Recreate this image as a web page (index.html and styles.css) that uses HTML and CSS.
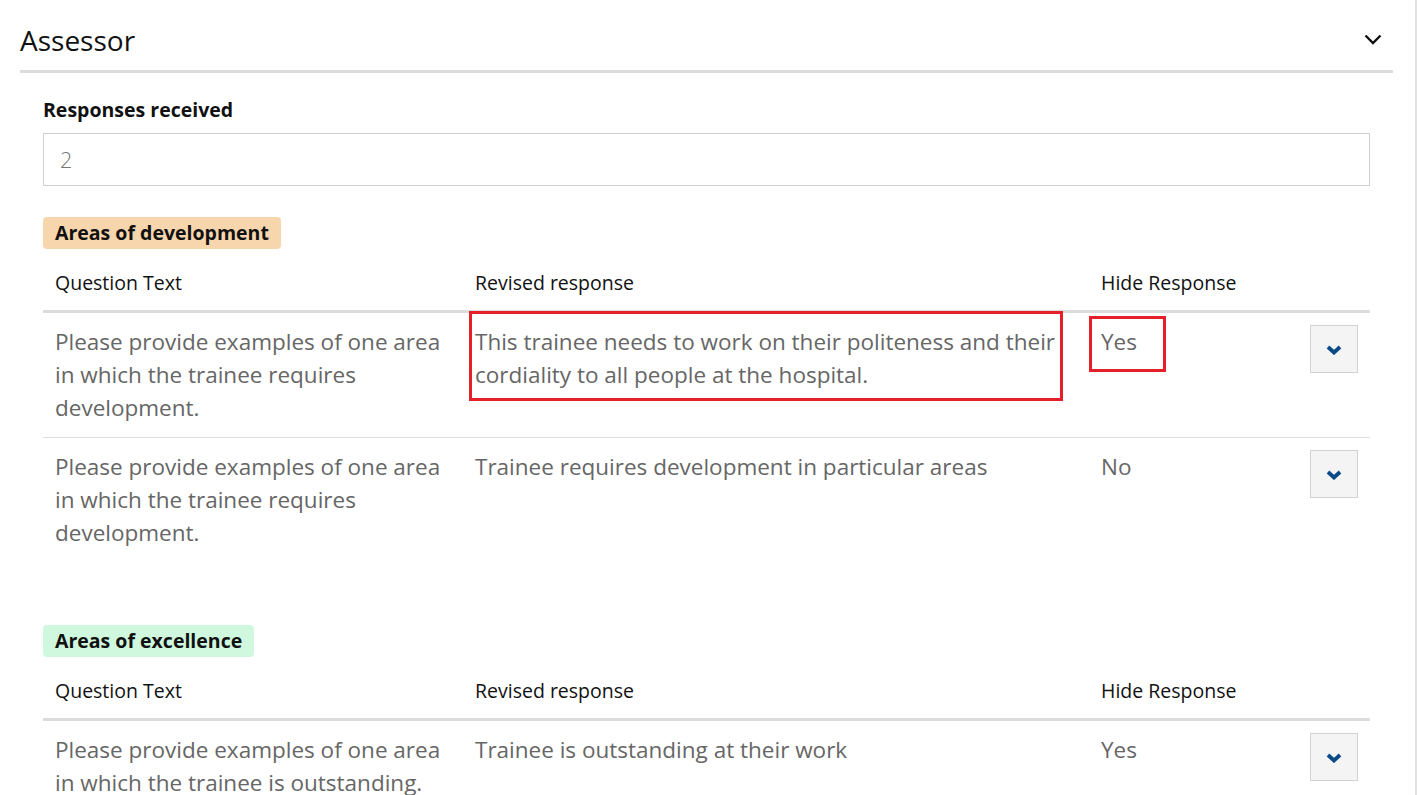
FILE: index.html
```html
<!DOCTYPE html>
<html>
<head>
<meta charset="utf-8">
<link rel="stylesheet" href="styles.css">
</head>
<body>
<div class="page">
  <section class="panel">
    <header class="panel-head">
      <h2 class="panel-title">Assessor</h2>
      <svg class="head-chevron" width="18" height="11" viewBox="0 0 18 11"><polyline points="1.5,1.5 9,9 16.5,1.5" fill="none" stroke="#111" stroke-width="2.4"/></svg>
    </header>
    <div class="panel-body">
      <label class="field-label">Responses received</label>
      <div class="field-input">2</div>

      <div class="group">
        <span class="badge badge-dev">Areas of development</span>
        <table class="resp-table">
          <colgroup><col class="c1"><col class="c2"><col class="c3"><col class="c4"></colgroup>
          <thead>
            <tr><th>Question Text</th><th>Revised response</th><th>Hide Response</th><th></th></tr>
          </thead>
          <tbody>
            <tr>
              <td>Please provide examples of one area in which the trainee requires development.</td>
              <td class="hl-cell">This trainee needs to work on their politeness and their cordiality to all people at the hospital.<span class="hl hl-resp"></span></td>
              <td class="hl-cell">Yes<span class="hl hl-yes"></span></td>
              <td class="btn-cell"><button class="expand"><svg width="16" height="10" viewBox="0 0 16 10"><polyline points="2,2 8,7.5 14,2" fill="none" stroke="#0a4a86" stroke-width="3.8"/></svg></button></td>
            </tr>
            <tr>
              <td>Please provide examples of one area in which the trainee requires development.</td>
              <td>Trainee requires development in particular areas</td>
              <td>No</td>
              <td class="btn-cell"><button class="expand"><svg width="16" height="10" viewBox="0 0 16 10"><polyline points="2,2 8,7.5 14,2" fill="none" stroke="#0a4a86" stroke-width="3.8"/></svg></button></td>
            </tr>
          </tbody>
        </table>
      </div>

      <div class="group group-exc">
        <span class="badge badge-exc">Areas of excellence</span>
        <table class="resp-table">
          <colgroup><col class="c1"><col class="c2"><col class="c3"><col class="c4"></colgroup>
          <thead>
            <tr><th>Question Text</th><th>Revised response</th><th>Hide Response</th><th></th></tr>
          </thead>
          <tbody>
            <tr>
              <td>Please provide examples of one area in which the trainee is outstanding.</td>
              <td>Trainee is outstanding at their work</td>
              <td>Yes</td>
              <td class="btn-cell"><button class="expand"><svg width="16" height="10" viewBox="0 0 16 10"><polyline points="2,2 8,7.5 14,2" fill="none" stroke="#0a4a86" stroke-width="3.8"/></svg></button></td>
            </tr>
          </tbody>
        </table>
      </div>
    </div>
  </section>
</div>
</body>
</html>
```

FILE: styles.css
```css
html, body {
  margin: 0;
  padding: 0;
  background: #fff;
  overflow: hidden;
}
body {
  font-family: "Open Sans", "Noto Sans", sans-serif;
  color: #111;
}
.page {
  width: 1415px;
  height: 795px;
  border-right: 2px solid #e2e2e2;
  overflow: hidden;
}
.panel {
  margin-left: 20px;
  width: 1373px;
}
.panel-head {
  height: 70px;
  display: flex;
  align-items: center;
  justify-content: space-between;
  border-bottom: 3px solid #dcdcdc;
  padding-right: 11px;
  box-sizing: content-box;
}
.panel-title {
  margin: 0;
  padding-top: 10px;
  font-size: 28px;
  font-weight: 400;
  color: #111;
}
.head-chevron {
  margin-top: 8px;
}
.panel-body {
  padding: 0 23px;
}
.field-label {
  display: block;
  margin-top: 23px;
  font-size: 19.5px;
  font-weight: 700;
  line-height: 28px;
  color: #111;
}
.field-input {
  margin-top: 9px;
  height: 51px;
  border: 1px solid #d0d0d0;
  padding-left: 16px;
  font-size: 21.5px;
  line-height: 51px;
  color: #777;
  font-weight: 300;
}
.group {
  margin-top: 31px;
}
.group-exc {
  margin-top: 63px;
}
.badge {
  display: inline-block;
  padding: 0 12px;
  height: 32px;
  line-height: 31px;
  border-radius: 4px;
  font-size: 19.5px;
  font-weight: 700;
  color: #111;
}
.badge-dev { background: #f8d6ad; }
.badge-exc { background: #cff8de; }
.resp-table {
  width: 100%;
  border-collapse: collapse;
  table-layout: fixed;
  margin-top: 6px;
}
col.c1 { width: 420px; }
col.c2 { width: 626px; }
col.c3 { width: 209px; }
col.c4 { width: auto; }
.resp-table th {
  text-align: left;
  font-weight: 400;
  font-size: 19.5px;
  color: #111;
  padding: 0 12px;
  height: 55px;
  vertical-align: middle;
  border-bottom: 3px solid #dcdcdc;
}
.resp-table td {
  vertical-align: top;
  padding: 12px 12px 13px 12px;
  font-size: 22.5px;
  line-height: 33px;
  color: #666;
  border-bottom: 1px solid #dedede;
}
.resp-table tbody tr:last-child td {
  border-bottom: none;
}
.hl-cell {
  position: relative;
}
.hl {
  position: absolute;
  border: 3px solid #e5202a;
  box-sizing: border-box;
  pointer-events: none;
}
.hl-resp {
  left: 6px;
  top: -2px;
  width: 594px;
  height: 90px;
}
.hl-yes {
  left: 0;
  top: 3px;
  width: 77px;
  height: 56px;
}
.btn-cell {
  text-align: right;
  padding-right: 12px !important;
}
.expand {
  width: 48px;
  height: 48px;
  margin-top: 0;
  background: #f4f4f4;
  border: 1px solid #d2d2d2;
  padding: 0;
  display: inline-flex;
  align-items: center;
  justify-content: center;
}
.expand svg {
  margin-top: 2px;
}
```
